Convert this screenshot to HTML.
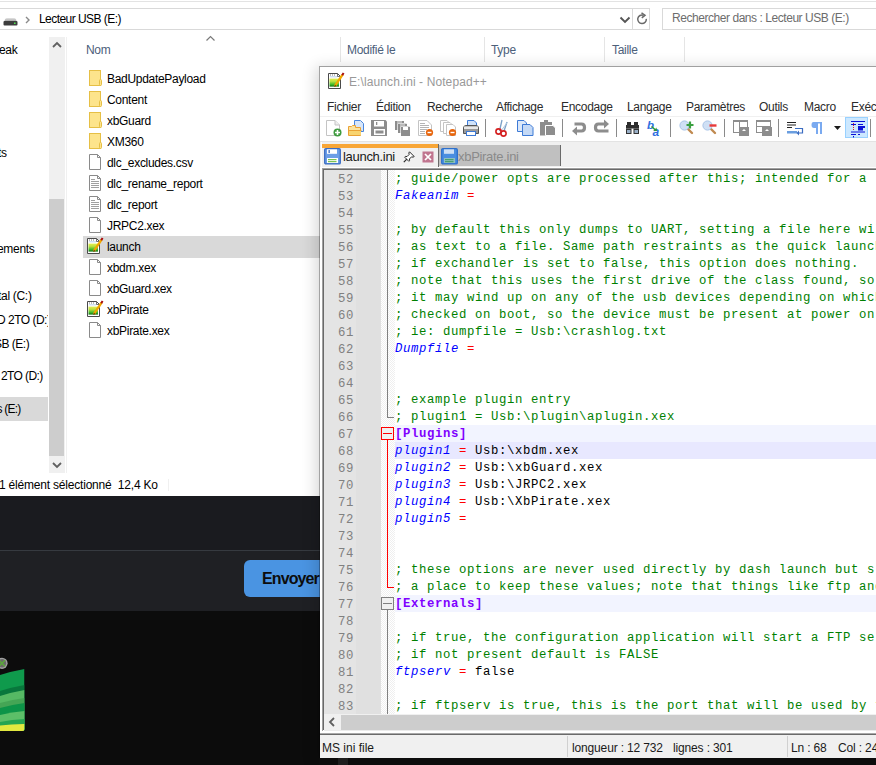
<!DOCTYPE html>
<html><head><meta charset="utf-8">
<style>
*{margin:0;padding:0;box-sizing:border-box}
html,body{width:876px;height:765px;overflow:hidden;background:#fff}
body{position:relative;font-family:"Liberation Sans",sans-serif;font-size:11.5px;color:#000}
.a{position:absolute}
.t{position:absolute;white-space:pre;line-height:1;font-size:12px;letter-spacing:-0.3px}
/* explorer */
#exp{position:absolute;left:0;top:0;width:876px;height:496px;background:#fff;overflow:hidden}
/* dark */
#dark{position:absolute;left:0;top:496px;width:320px;height:269px;background:#0c0c0c;overflow:hidden}
/* npp */
#npp{position:absolute;left:319px;top:66px;width:557px;height:699px;overflow:hidden}
.ln{position:absolute;left:0;width:30px;height:17px;font-family:"Liberation Mono",monospace;font-size:12.3px;letter-spacing:0.62px;line-height:21px;color:#808080;white-space:pre}
.ln span{position:absolute;right:0}
.cl{position:absolute;left:71px;height:17px;font-family:"Liberation Mono",monospace;font-size:12.3px;letter-spacing:0.62px;line-height:19px;white-space:pre;width:600px}
.c{color:#008000}
.k{color:#0000ff;font-style:italic}
.e{color:#ff0000}
.s{color:#8000ff;font-weight:bold}
</style></head><body>

<div id="exp">
  <!-- top strip -->
  <div class="a" style="left:0;top:1px;width:876px;height:1px;background:#e3e3e3"></div>
  <!-- address bar -->
  <div class="a" style="left:-2px;top:8px;width:652px;height:22px;border:1px solid #d9d9d9"></div>
  <div class="a" style="left:632px;top:9px;width:1px;height:20px;background:#d9d9d9"></div>
  <div class="a" style="left:662px;top:8px;width:220px;height:22px;border:1px solid #d9d9d9"></div>
  <div class="t" style="left:39px;top:12.5px;letter-spacing:-0.55px">Lecteur USB (E:)</div>
  <div class="t" style="left:672px;top:12px;letter-spacing:-0.45px;color:#6d6d6d">Rechercher dans : Lecteur USB (E:)</div>
  <!-- drive icon -->
  <svg class="a" style="left:2px;top:15px" width="18" height="12"><defs><linearGradient id="dg" x1="0" y1="0" x2="0" y2="1"><stop offset="0" stop-color="#e4e4e4"/><stop offset="1" stop-color="#a9a9a9"/></linearGradient></defs><path d="M2.5 6 Q3 3 5 3 H12 Q14 3 14.5 6 Z" fill="url(#dg)"/><rect x="1.5" y="6" width="14" height="4.5" rx="1" fill="#3c3c3c"/><rect x="12" y="7.5" width="1.6" height="1.5" fill="#4fe04f"/></svg>
  <svg class="a" style="left:24px;top:15px" width="8" height="10"><path d="M2 2 L5 5 L2 8" stroke="#8a8a8a" stroke-width="1.4" fill="none"/></svg>
  <svg class="a" style="left:619px;top:15px" width="12" height="10"><path d="M1.5 2.5 L6 7 L10.5 2.5" stroke="#555" stroke-width="1.9" fill="none"/></svg>
  <svg class="a" style="left:636px;top:12px" width="13" height="14"><path d="M10.3 6.8 A4.3 4.3 0 1 1 7.5 3.2" stroke="#6a6a6a" stroke-width="1.5" fill="none"/><path d="M5.5 0.8 L9 3.2 L5.8 5.8" stroke="#6a6a6a" stroke-width="1.5" fill="none"/></svg>

  <!-- nav pane -->
  <div class="a" style="left:0;top:37px;width:48px;height:438px;overflow:hidden">
  <div class="t" style="left:-1px;top:7px">eak</div>
  <div class="t" style="left:-2px;top:110px">ts</div>
  <div class="t" style="left:-3px;top:206px">ements</div>
  <div class="t" style="left:-2px;top:253px">tal (C:)</div>
  <div class="t" style="left:-3px;top:277px;letter-spacing:-0.5px">D 2TO (D:)</div>
  <div class="t" style="left:-6px;top:301px;letter-spacing:-0.5px">SB (E:)</div>
  <div class="a" style="left:0;top:360px;width:48px;height:24px;background:#d9d9d9"></div>
  <div class="t" style="left:1px;top:333px;letter-spacing:-0.6px">2TO (D:)</div>
  <div class="t" style="left:-3.5px;top:366px;letter-spacing:-0.8px">s (E:)</div>
  </div>
  <!-- nav scrollbar -->
  <div class="a" style="left:49px;top:37px;width:16px;height:436px;background:#f0f0f0"></div>
  <div class="a" style="left:49px;top:199px;width:15px;height:257px;background:#cdcdcd"></div>
  <svg class="a" style="left:51px;top:40px" width="12" height="10"><path d="M2 7 L6 3 L10 7" stroke="#606060" stroke-width="1.8" fill="none"/></svg>
  <svg class="a" style="left:51px;top:460px" width="12" height="10"><path d="M2 3 L6 7 L10 3" stroke="#606060" stroke-width="1.8" fill="none"/></svg>
  <div class="a" style="left:66px;top:37px;width:1px;height:436px;background:#f0f0f0"></div>

  <!-- column headers -->
  <div class="t" style="left:86px;top:44px;color:#4c607a">Nom</div>
  <div class="t" style="left:347px;top:44px;color:#4c607a">Modifié le</div>
  <div class="t" style="left:491px;top:44px;color:#4c607a">Type</div>
  <div class="t" style="left:612px;top:44px;color:#4c607a">Taille</div>
  <div class="a" style="left:340px;top:37px;width:1px;height:25px;background:#e5e5e5"></div>
  <div class="a" style="left:484px;top:37px;width:1px;height:25px;background:#e5e5e5"></div>
  <div class="a" style="left:604px;top:37px;width:1px;height:25px;background:#e5e5e5"></div>
  <div class="a" style="left:684px;top:37px;width:1px;height:25px;background:#e5e5e5"></div>
  <svg class="a" style="left:205px;top:35px" width="11" height="7"><path d="M1.5 5.5 L5.5 1.5 L9.5 5.5" stroke="#7a7a7a" stroke-width="1.2" fill="none"/></svg>

  <!-- file rows -->
  <div class="a" style="left:83px;top:236px;width:300px;height:22px;background:#d9d9d9"></div>
  <svg class="a" style="left:88px;top:70px" width="16" height="17"><rect x="1.5" y="0.5" width="11" height="15" fill="#fde48c" stroke="#e6bf45"/><rect x="11.5" y="9.5" width="2" height="6" rx="1" fill="#fde48c" stroke="#e6bf45"/></svg>
<div class="t" style="left:107px;top:73px">BadUpdatePayload</div>
<svg class="a" style="left:88px;top:91px" width="16" height="17"><rect x="1.5" y="0.5" width="11" height="15" fill="#fde48c" stroke="#e6bf45"/><rect x="11.5" y="9.5" width="2" height="6" rx="1" fill="#fde48c" stroke="#e6bf45"/></svg>
<div class="t" style="left:107px;top:94px">Content</div>
<svg class="a" style="left:88px;top:112px" width="16" height="17"><rect x="1.5" y="0.5" width="11" height="15" fill="#fde48c" stroke="#e6bf45"/><rect x="11.5" y="9.5" width="2" height="6" rx="1" fill="#fde48c" stroke="#e6bf45"/></svg>
<div class="t" style="left:107px;top:115px">xbGuard</div>
<svg class="a" style="left:88px;top:133px" width="16" height="17"><rect x="1.5" y="0.5" width="11" height="15" fill="#fde48c" stroke="#e6bf45"/><rect x="11.5" y="9.5" width="2" height="6" rx="1" fill="#fde48c" stroke="#e6bf45"/></svg>
<div class="t" style="left:107px;top:136px">XM360</div>
<svg class="a" style="left:88px;top:154px" width="16" height="17"><path d="M1.5 0.5 H9.5 L12.5 3.5 V15.5 H1.5 Z" fill="#fff" stroke="#8a8a8a"/><path d="M9.5 0.5 V3.5 H12.5" fill="none" stroke="#8a8a8a"/></svg>
<div class="t" style="left:107px;top:157px">dlc_excludes.csv</div>
<svg class="a" style="left:88px;top:175px" width="16" height="17"><path d="M1.5 0.5 H9.5 L12.5 3.5 V15.5 H1.5 Z" fill="#fff" stroke="#8a8a8a"/><path d="M9.5 0.5 V3.5 H12.5" fill="none" stroke="#8a8a8a"/><path d="M3 4.5 H7 M3 6.5 H11 M3 8.5 H11 M3 10.5 H11 M3 12.5 H11" stroke="#a0a0a0"/></svg>
<div class="t" style="left:107px;top:178px">dlc_rename_report</div>
<svg class="a" style="left:88px;top:196px" width="16" height="17"><path d="M1.5 0.5 H9.5 L12.5 3.5 V15.5 H1.5 Z" fill="#fff" stroke="#8a8a8a"/><path d="M9.5 0.5 V3.5 H12.5" fill="none" stroke="#8a8a8a"/><path d="M3 4.5 H7 M3 6.5 H11 M3 8.5 H11 M3 10.5 H11 M3 12.5 H11" stroke="#a0a0a0"/></svg>
<div class="t" style="left:107px;top:199px">dlc_report</div>
<svg class="a" style="left:88px;top:217px" width="16" height="17"><path d="M1.5 0.5 H9.5 L12.5 3.5 V15.5 H1.5 Z" fill="#fff" stroke="#8a8a8a"/><path d="M9.5 0.5 V3.5 H12.5" fill="none" stroke="#8a8a8a"/></svg>
<div class="t" style="left:107px;top:220px">JRPC2.xex</div>
<svg class="a" style="left:86px;top:237px" width="18" height="18"><path d="M1.5 1.5 H10.5 L13.5 4.5 V16.5 H1.5 Z" fill="#fff" stroke="#4a4a4a" stroke-width="1"/>
<path d="M10.5 1.5 V4.5 H13.5" fill="none" stroke="#4a4a4a" stroke-width="0.8"/>
<path d="M3.5 2.5 V3.5 M5.5 2.5 V3.5 M7.5 2.5 V3.5" stroke="#666" stroke-width="0.9"/>
<path d="M3 4.8 H10" stroke="#a8c8e8" stroke-width="0.8"/>
<rect x="2.5" y="6.6" width="9.5" height="8" fill="url(#gg)"/>
<path d="M7.8 14.2 L15.6 2.6" stroke="#f0a800" stroke-width="2.4"/>
<path d="M7.6 14.6 L8.6 13" stroke="#6a4a10" stroke-width="1.4"/>
<path d="M15.2 3.2 L16.6 1" stroke="#a80a0a" stroke-width="2"/></svg>
<div class="t" style="left:107px;top:241px">launch</div>
<svg class="a" style="left:88px;top:259px" width="16" height="17"><path d="M1.5 0.5 H9.5 L12.5 3.5 V15.5 H1.5 Z" fill="#fff" stroke="#8a8a8a"/><path d="M9.5 0.5 V3.5 H12.5" fill="none" stroke="#8a8a8a"/></svg>
<div class="t" style="left:107px;top:262px">xbdm.xex</div>
<svg class="a" style="left:88px;top:280px" width="16" height="17"><path d="M1.5 0.5 H9.5 L12.5 3.5 V15.5 H1.5 Z" fill="#fff" stroke="#8a8a8a"/><path d="M9.5 0.5 V3.5 H12.5" fill="none" stroke="#8a8a8a"/></svg>
<div class="t" style="left:107px;top:283px">xbGuard.xex</div>
<svg class="a" style="left:86px;top:300px" width="18" height="18"><path d="M1.5 1.5 H10.5 L13.5 4.5 V16.5 H1.5 Z" fill="#fff" stroke="#4a4a4a" stroke-width="1"/>
<path d="M10.5 1.5 V4.5 H13.5" fill="none" stroke="#4a4a4a" stroke-width="0.8"/>
<path d="M3.5 2.5 V3.5 M5.5 2.5 V3.5 M7.5 2.5 V3.5" stroke="#666" stroke-width="0.9"/>
<path d="M3 4.8 H10" stroke="#a8c8e8" stroke-width="0.8"/>
<rect x="2.5" y="6.6" width="9.5" height="8" fill="url(#gg)"/>
<path d="M7.8 14.2 L15.6 2.6" stroke="#f0a800" stroke-width="2.4"/>
<path d="M7.6 14.6 L8.6 13" stroke="#6a4a10" stroke-width="1.4"/>
<path d="M15.2 3.2 L16.6 1" stroke="#a80a0a" stroke-width="2"/></svg>
<div class="t" style="left:107px;top:304px">xbPirate</div>
<svg class="a" style="left:88px;top:322px" width="16" height="17"><path d="M1.5 0.5 H9.5 L12.5 3.5 V15.5 H1.5 Z" fill="#fff" stroke="#8a8a8a"/><path d="M9.5 0.5 V3.5 H12.5" fill="none" stroke="#8a8a8a"/></svg>
<div class="t" style="left:107px;top:325px">xbPirate.xex</div>

  <!-- status -->
  <div class="t" style="left:-1px;top:479px;letter-spacing:-0.2px">1 élément sélectionné  12,4 Ko</div>
  <div class="a" style="left:168px;top:479px;width:1px;height:12px;background:#f0f0f0"></div>
</div>

<div id="dark">
  <div class="a" style="left:0;top:0;width:320px;height:54px;background:#1a1b1f"></div>
  <div class="a" style="left:0;top:54px;width:320px;height:1px;background:#363a40"></div>
  <div class="a" style="left:0;top:55px;width:320px;height:60px;background:#1f2024"></div>
  <div class="a" style="left:244px;top:64px;width:90px;height:37px;background:#4a94e2;border-radius:6px"></div>
  <div class="t" style="left:262px;top:74.5px;font-size:16px;font-weight:bold;letter-spacing:-0.9px;color:#0d0d0d">Envoyer</div>
  <!-- xbox logo -->
  <svg class="a" style="left:0;top:155px" width="30" height="85"><defs><clipPath id="xc"><path d="M0 0 H24.5 V78 Q24.5 80 22.5 80 H0 Z"/></clipPath></defs><g clip-path="url(#xc)">
<path d="M0 24 Q12 20.2 24.5 18 L24.5 82 L0 82 Z" fill="#0f9a4c"/>
<path d="M0 40 Q12 36.2 24.5 34 L24.5 82 L0 82 Z" fill="#08773c"/>
<path d="M0 45 Q12 41.2 24.5 39 L24.5 82 L0 82 Z" fill="#56b964"/>
<path d="M0 52 Q12 48.7 24.5 47 L24.5 82 L0 82 Z" fill="#45a555"/>
<path d="M0 57 Q12 53.7 24.5 52 L24.5 82 L0 82 Z" fill="#0d9448"/>
<path d="M0 64 Q12 61.2 24.5 60 L24.5 82 L0 82 Z" fill="#5cbf68"/>
<path d="M0 71 Q12 68.7 24.5 68 L24.5 82 L0 82 Z" fill="#25a552"/>
<path d="M0 74.5 Q12 72.95 24.5 73 L24.5 82 L0 82 Z" fill="#e2e840"/></g>
    <circle cx="2" cy="12.3" r="5.6" fill="#a0a0a0"/><circle cx="2" cy="12.3" r="4.2" fill="#6a6a6a"/><path d="M-1 9.3 L5 15.3 M5 9.3 L-1 15.3" stroke="#5aa83a" stroke-width="1.4"/>
  </svg>
</div>

<div class="a" style="left:319px;top:66px;width:600px;height:692px;box-shadow:-1px 3px 14px 2px rgba(0,0,0,0.16)"></div>
<div id="npp">
  <div class="a" style="left:1px;top:1px;width:556px;height:691px;background:#fff"></div>
  <!-- borders -->
  <div class="a" style="left:0;top:0;width:1px;height:699px;background:rgba(0,0,0,0.36)"></div>
  <div class="a" style="left:0;top:0;width:557px;height:1px;background:#a0a0a0"></div>
  <!-- title -->
  <svg class="a" style="left:8px;top:6px" width="18" height="18"><defs><linearGradient id="gg" x1="0" y1="0" x2="0" y2="1"><stop offset="0" stop-color="#e6ee50"/><stop offset="0.35" stop-color="#b8e040"/><stop offset="0.75" stop-color="#3cb82a"/><stop offset="1" stop-color="#0a6e0a"/></linearGradient></defs>
<path d="M1.5 1.5 H10.5 L13.5 4.5 V16.5 H1.5 Z" fill="#fff" stroke="#4a4a4a" stroke-width="1"/>
<path d="M10.5 1.5 V4.5 H13.5" fill="none" stroke="#4a4a4a" stroke-width="0.8"/>
<path d="M3.5 2.5 V3.5 M5.5 2.5 V3.5 M7.5 2.5 V3.5" stroke="#666" stroke-width="0.9"/>
<path d="M3 4.8 H10" stroke="#a8c8e8" stroke-width="0.8"/>
<rect x="2.5" y="6.6" width="9.5" height="8" fill="url(#gg)"/>
<path d="M7.8 14.2 L15.6 2.6" stroke="#f0a800" stroke-width="2.4"/>
<path d="M7.6 14.6 L8.6 13" stroke="#6a4a10" stroke-width="1.4"/>
<path d="M15.2 3.2 L16.6 1" stroke="#a80a0a" stroke-width="2"/>
</svg>
  <div class="t" style="left:30px;top:10px;letter-spacing:0.1px;color:#999">E:\launch.ini - Notepad++</div>
  <!-- menu -->
  <div class="t" style="left:8px;top:35px;color:#2b2b2b">Fichier</div>
  <div class="t" style="left:57px;top:35px;color:#2b2b2b">Édition</div>
  <div class="t" style="left:108px;top:35px;color:#2b2b2b">Recherche</div>
  <div class="t" style="left:177px;top:35px;color:#2b2b2b">Affichage</div>
  <div class="t" style="left:242px;top:35px;color:#2b2b2b">Encodage</div>
  <div class="t" style="left:308px;top:35px;color:#2b2b2b">Langage</div>
  <div class="t" style="left:367px;top:35px;color:#2b2b2b">Paramètres</div>
  <div class="t" style="left:440px;top:35px;color:#2b2b2b">Outils</div>
  <div class="t" style="left:485px;top:35px;color:#2b2b2b">Macro</div>
  <div class="t" style="left:532px;top:35px;color:#2b2b2b">Exécution</div>
  <div class="a" style="left:1px;top:50px;width:556px;height:1px;background:#f0f0f0"></div>
  <!-- toolbar -->
  <svg class="a" style="left:0;top:51px" width="557" height="24"><g transform="translate(-319,-117)">
<!-- new -->
<path d="M326.5 120.5 H335 L339.5 125 V135.5 H326.5 Z" fill="#fff" stroke="#c4c4c4"/>
<path d="M335 120.5 V125 H339.5" fill="#eee" stroke="#c4c4c4"/>
<circle cx="337.5" cy="132.5" r="4" fill="#3f9b3f"/>
<path d="M337.5 130 V135 M335 132.5 H340" stroke="#fff" stroke-width="1.6"/>
<!-- open -->
<path d="M354.5 120.5 H360.5 L363.5 123.5 V131.5 H354.5 Z" fill="#d6e6fb" stroke="#4a86dc"/>
<path d="M348.5 126.5 H351.5 L352.5 125.5 H355.5 V127.5 H360.5 V135.5 H348.5 Z" fill="#fbe3a0" stroke="#eaa235"/>
<path d="M349 130.5 H361 V135 H349 Z" fill="#f8d470"/>
<path d="M348.5 130.5 H361.5" stroke="#eaa235"/>
<!-- save -->
<path d="M371 120 H385.5 L387 121.5 V136 H371 Z" fill="#8d8d8d"/>
<rect x="374" y="121" width="10" height="5.5" fill="#fff"/>
<rect x="376" y="122" width="1.3" height="3" fill="#8d8d8d"/>
<rect x="374" y="129" width="11" height="6" fill="#fff"/>
<rect x="375.5" y="130.5" width="8" height="3" fill="#8d8d8d"/>
<!-- save all -->
<rect x="395" y="121" width="9" height="9" fill="#8d8d8d"/>
<rect x="397" y="121.5" width="5" height="1" fill="#e8e8e8"/>
<path d="M397.5 130 V123.5 H406.5" stroke="#d8d8d8" stroke-width="1" fill="none"/>
<rect x="398" y="124" width="9" height="9" fill="#8d8d8d"/>
<rect x="400" y="124.5" width="5" height="1" fill="#e8e8e8"/>
<path d="M400.5 133 V126.5 H409.5" stroke="#d8d8d8" stroke-width="1" fill="none"/>
<rect x="401" y="127" width="9" height="9" fill="#8d8d8d"/>
<rect x="403" y="127" width="5" height="3" fill="#fff"/>
<!-- close -->
<path d="M418.5 120.5 H427 L431.5 125 V135.5 H418.5 Z" fill="#fff" stroke="#c4c4c4"/>
<path d="M420 123.5 H425 M420 125.5 H429 M420 127.5 H429 M420 129.5 H427 M420 131.5 H425 M420 133.5 H425" stroke="#b4b4b4" stroke-width="1"/>
<circle cx="429.5" cy="132.5" r="3.6" fill="#e8650c"/>
<path d="M427.5 132.5 H431.5" stroke="#fff" stroke-width="1.4"/>
<!-- close all -->
<path d="M440.5 120.5 H447 L449.5 123 V131.5 H440.5 Z" fill="#fff" stroke="#c4c4c4"/>
<path d="M443.5 122.5 H450 L452.5 125 V133.5 H443.5 Z" fill="#fff" stroke="#c4c4c4"/>
<path d="M446.5 124.5 H453 L455.5 127 V135.5 H446.5 Z" fill="#fff" stroke="#c4c4c4"/>
<circle cx="452.5" cy="132.5" r="3.6" fill="#e8650c"/>
<path d="M450.5 132.5 H454.5" stroke="#fff" stroke-width="1.4"/>
<!-- print -->
<path d="M467.5 120.5 H474 L476.5 123 V128 H467.5 Z" fill="#cfe2fa" stroke="#3d7ad6"/>
<path d="M463.5 128 Q463.5 125.5 466 125.5 H476 Q478.5 125.5 478.5 128 V133.5 H463.5 Z" fill="#9a9a9a" stroke="#555"/>
<rect x="464" y="126.5" width="14" height="2.5" fill="#e8e8e8"/>
<rect x="466.5" y="131.5" width="9" height="4" fill="#fff" stroke="#3d7ad6"/>
<!-- sep -->
<rect x="485" y="119" width="1" height="18" fill="#8a8a8a"/>
<!-- cut -->
<path d="M499.5 131 L502 120 M504 131 L507 122" stroke="#7aa0c8" stroke-width="1.3"/>
<path d="M501 131 L507.5 122" stroke="#b0c8e0" stroke-width="1"/>
<circle cx="498.5" cy="131.5" r="2.6" fill="none" stroke="#d42020" stroke-width="1.6"/>
<circle cx="503.5" cy="133.5" r="2.6" fill="none" stroke="#d42020" stroke-width="1.6"/>
<!-- copy -->
<path d="M517.5 120.5 H524 L526.5 123 V131.5 H517.5 Z" fill="#dbe8fa" stroke="#3d7ad6"/>
<path d="M522.5 124.5 H530 L533 127.5 V135.5 H522.5 Z" fill="#c4d9f6" stroke="#3d7ad6"/>
<!-- paste -->
<path d="M540 122 H544 V120 H548 V122 H552 V135.5 H540 Z" fill="#8d8d8d"/>
<path d="M545.5 125.5 H553 L555.5 128 V135.5 H545.5 Z" fill="#8d8d8d" stroke="#fff" stroke-width="1"/>
<path d="M547 127 H552 V134 H547 Z" fill="#8d8d8d"/>
<!-- sep -->
<rect x="562" y="119" width="1" height="18" fill="#8a8a8a"/>
<!-- undo -->
<path d="M574.5 124 H581.5 Q584.5 124 584.5 127.5 Q584.5 131 581.5 131 H577" stroke="#8d8d8d" stroke-width="3.2" fill="none"/>
<path d="M572 131 L577 126.5 V135.5 Z" fill="#8d8d8d"/>
<!-- redo -->
<path d="M605 124 H598.5 Q595.5 124 595.5 127.5 Q595.5 131 598.5 131 H608.5" stroke="#8d8d8d" stroke-width="3.2" fill="none"/>
<path d="M609 124 L604 119.5 V128.5 Z" fill="#8d8d8d"/>
<!-- sep -->
<rect x="616" y="119" width="1" height="18" fill="#8a8a8a"/>
<!-- find -->
<rect x="627" y="122" width="4" height="3" fill="#2e2e2e"/>
<rect x="634" y="122" width="4" height="3" fill="#2e2e2e"/>
<rect x="626" y="125" width="13" height="3.5" fill="#2e2e2e"/>
<rect x="626" y="128.5" width="5.5" height="5.5" fill="#333"/>
<rect x="633.5" y="128.5" width="5.5" height="5.5" fill="#333"/>
<rect x="627" y="130" width="3.5" height="3" fill="#9ab0c8"/>
<rect x="634.5" y="130" width="3.5" height="3" fill="#9ab0c8"/>
<!-- replace -->
<text x="647" y="128.5" font-family="Liberation Sans" font-style="italic" font-weight="bold" font-size="11.5" fill="#2f6fe0">b</text>
<text x="652.5" y="136" font-family="Liberation Sans" font-style="italic" font-weight="bold" font-size="12" fill="#2f6fe0">a</text>
<path d="M651.5 126.5 L655.5 130" stroke="#2e9a3a" stroke-width="1.6"/>
<path d="M653.5 131 L657 131 L656.5 127.5 Z" fill="#2e9a3a"/>
<!-- sep -->
<rect x="670" y="119" width="1" height="18" fill="#8a8a8a"/>
<!-- zoom in -->
<path d="M688 129 L692 133" stroke="#c08a50" stroke-width="2.4" stroke-linecap="round"/>
<circle cx="684.5" cy="125.5" r="4.6" fill="#cfe0f5" stroke="#a8c4e8" stroke-width="1"/>
<path d="M690 121.5 V128.5 M686.5 125 H693.5" stroke="#3aa040" stroke-width="2.2"/>
<!-- zoom out -->
<path d="M711 129 L715 133" stroke="#c08a50" stroke-width="2.4" stroke-linecap="round"/>
<circle cx="707.5" cy="125.5" r="4.6" fill="#cfe0f5" stroke="#a8c4e8" stroke-width="1"/>
<path d="M709.5 125.5 H716.5" stroke="#e83a3a" stroke-width="2.4"/>
<!-- sep -->
<rect x="724" y="119" width="1" height="18" fill="#8a8a8a"/>
<!-- sync v -->
<rect x="733.5" y="120.5" width="14" height="12" fill="#fff" stroke="#8d8d8d"/>
<rect x="733" y="120" width="15" height="2" fill="#8d8d8d"/>
<path d="M739.5 121 V132" stroke="#8d8d8d"/>
<rect x="739" y="127" width="10" height="9" fill="#8d8d8d"/>
<path d="M742 131 L744 129 L746 131" fill="#fff"/>
<!-- sync h -->
<rect x="756.5" y="120.5" width="14" height="12" fill="#fff" stroke="#8d8d8d"/>
<rect x="756" y="120" width="15" height="2" fill="#8d8d8d"/>
<path d="M757 126.5 H770" stroke="#8d8d8d"/>
<rect x="762" y="127" width="10" height="9" fill="#8d8d8d"/>
<path d="M765 131 L767 129 L769 131" fill="#fff"/>
<!-- sep -->
<rect x="778" y="119" width="1" height="18" fill="#8a8a8a"/>
<!-- wrap -->
<path d="M787 122.5 H796 M787 125 H796 M787 127.5 H792" stroke="#222" stroke-width="1"/>
<rect x="787" y="131" width="10" height="2.5" fill="#6a9ee0"/>
<path d="M795 128.5 H802.5 V133 H798" stroke="#3a6cc2" stroke-width="1.2" fill="none"/>
<path d="M796.5 133 L799 130.5 V135.5 Z" fill="#3a6cc2"/>
<!-- pilcrow -->
<path d="M817 122 H813.5 Q811.5 122 811.5 125 Q811.5 128 814 128 H817" fill="#7aaaf0"/>
<rect x="816" y="122" width="2" height="12" fill="#7aaaf0"/>
<rect x="820" y="122" width="2" height="12" fill="#7aaaf0"/>
<rect x="816" y="122" width="6" height="1.5" fill="#7aaaf0"/>
<!-- dropdown -->
<path d="M834 126 H841 L837.5 130 Z" fill="#1a1a1a"/>
<!-- indent guide (checked) -->
<rect x="845.5" y="117.5" width="22" height="20" fill="#cce8ff" stroke="#99d1ff"/>
<path d="M851 121.5 H865 M851 124.5 H856 M858 124.5 H863 M858 126.5 H865 M858 128.5 H863 M851 132 H865 M851 134.5 H856 M858 134.5 H860" stroke="#0a10d8" stroke-width="1.2"/>
<rect x="858" y="126" width="7" height="2" fill="#0a10d8"/>
<rect x="858" y="128.5" width="5" height="2" fill="#0a10d8"/>
<path d="M853.5 123 V131" stroke="#e02020" stroke-width="1" stroke-dasharray="1 1"/>
<rect x="853" y="136" width="1" height="1.5" fill="#0a10d8"/>
<!-- sep -->
<rect x="870" y="119" width="1" height="18" fill="#8a8a8a"/>
</g></svg>
  <div class="a" style="left:1px;top:75px;width:556px;height:1px;background:#e3e3e3"></div>
  <!-- tab bar -->
  <div class="a" style="left:1px;top:76px;width:556px;height:25px;background:#f0f0f0"></div>
  <div class="a" style="left:1px;top:101px;width:556px;height:1px;background:#fff"></div>
  <div class="a" style="left:2px;top:76px;width:1px;height:25px;background:#fff"></div>
  <div class="a" style="left:3px;top:78px;width:116px;height:4px;background:#f8a637"></div>
  <div class="a" style="left:119px;top:78px;width:1px;height:23px;background:#6a6a6a"></div>
  <div class="a" style="left:120px;top:79px;width:121px;height:21px;background:#c0c0c0"></div>
  <div class="a" style="left:241px;top:79px;width:1px;height:21px;background:#6a6a6a"></div>
  <svg class="a" style="left:5px;top:82px" width="17" height="17"><rect x="0.7" y="0.7" width="15.6" height="15.2" rx="1.2" fill="#6c9ee6" stroke="#3a6cc2" stroke-width="1.3"/><rect x="3" y="1.3" width="10" height="4.5" fill="#fff"/><rect x="4.5" y="2" width="1.3" height="3" fill="#3a6cc2"/><rect x="3" y="10" width="11" height="5" fill="#fff"/><rect x="4" y="11" width="8.5" height="1.2" fill="#7cc352"/><rect x="4" y="13" width="8.5" height="1.2" fill="#7cc352"/></svg>
  <div class="t" style="left:24px;top:84px;font-size:13px;color:#1a1a1a">launch.ini</div>
  <svg class="a" style="left:84px;top:85px" width="12" height="12"><path d="M6.5 0.8 L11.2 5.5 L10 6.2 L8.6 5.8 L6.4 8 L6.6 9.6 L5.8 10.3 L1.7 6.2 L2.4 5.4 L4 5.6 L6.2 3.4 L5.8 2 Z" fill="#fff" stroke="#2a2a2a" stroke-width="1"/><path d="M3.8 8.2 L0.8 11.2" stroke="#2a2a2a" stroke-width="1.2"/></svg>
  <svg class="a" style="left:103px;top:85px" width="12" height="12"><rect x="0.5" y="0.5" width="11" height="11" fill="#c0758f"/><path d="M3 3 L9 9 M9 3 L3 9" stroke="#fff" stroke-width="1.7"/></svg>
  <svg class="a" style="left:122px;top:82px" width="17" height="17"><rect x="0.7" y="0.7" width="15.6" height="15.2" rx="1.2" fill="#4a8ee0" stroke="#2d6fcc" stroke-width="1.3"/><rect x="3" y="1.3" width="10" height="4.5" fill="#cfe0f5"/><rect x="3" y="10" width="11" height="5" fill="#8fc0c0"/><rect x="4" y="11" width="8.5" height="1.2" fill="#4aa070"/><rect x="4" y="13" width="8.5" height="1.2" fill="#4aa070"/></svg>
  <div class="t" style="left:139px;top:84px;font-size:13px;color:#8a8a8a">xbPirate.ini</div>
  <!-- editor frame -->
  <div class="a" style="left:3px;top:102px;width:554px;height:1px;background:#a0a0a0"></div>
  <div class="a" style="left:3px;top:103px;width:554px;height:1px;background:#696969"></div>
  <div class="a" style="left:3px;top:103px;width:1px;height:562px;background:#a0a0a0"></div>
  <div class="a" style="left:4px;top:103px;width:1px;height:561px;background:#696969"></div>
  <div id="ed" style="position:absolute;left:5px;top:104px;width:552px;height:544px;background:#fff;overflow:hidden">
    <div class="a" style="left:0;top:0;width:32px;height:544px;background:#e4e4e4"></div>
    <div class="a" style="left:32px;top:0;width:25px;height:544px;background:#e0e0e0"></div>
    <div class="a" style="left:57px;top:0;width:14px;height:544px;background-color:#fff;background-image:repeating-conic-gradient(#efefef 0 25%,#fff 0 50%);background-size:2px 2px"></div>
<div class="cl" style="top:0px;"><span class="c">; guide/power opts are processed after this; intended for a</span></div>
<div class="ln" style="top:0px"><span>52</span></div>
<div class="cl" style="top:17px;"><span class="k">Fakeanim</span> <span class="e">=</span> </div>
<div class="ln" style="top:17px"><span>53</span></div>
<div class="cl" style="top:34px;"></div>
<div class="ln" style="top:34px"><span>54</span></div>
<div class="cl" style="top:51px;"><span class="c">; by default this only dumps to UART, setting a file here will</span></div>
<div class="ln" style="top:51px"><span>55</span></div>
<div class="cl" style="top:68px;"><span class="c">; as text to a file. Same path restraints as the quick launch</span></div>
<div class="ln" style="top:68px"><span>56</span></div>
<div class="cl" style="top:85px;"><span class="c">; if exchandler is set to false, this option does nothing.</span></div>
<div class="ln" style="top:85px"><span>57</span></div>
<div class="cl" style="top:102px;"><span class="c">; note that this uses the first drive of the class found, so</span></div>
<div class="ln" style="top:102px"><span>58</span></div>
<div class="cl" style="top:119px;"><span class="c">; it may wind up on any of the usb devices depending on which</span></div>
<div class="ln" style="top:119px"><span>59</span></div>
<div class="cl" style="top:136px;"><span class="c">; checked on boot, so the device must be present at power on</span></div>
<div class="ln" style="top:136px"><span>60</span></div>
<div class="cl" style="top:153px;"><span class="c">; ie: dumpfile = Usb:\crashlog.txt</span></div>
<div class="ln" style="top:153px"><span>61</span></div>
<div class="cl" style="top:170px;"><span class="k">Dumpfile</span> <span class="e">=</span> </div>
<div class="ln" style="top:170px"><span>62</span></div>
<div class="cl" style="top:187px;"></div>
<div class="ln" style="top:187px"><span>63</span></div>
<div class="cl" style="top:204px;"></div>
<div class="ln" style="top:204px"><span>64</span></div>
<div class="cl" style="top:221px;"><span class="c">; example plugin entry</span></div>
<div class="ln" style="top:221px"><span>65</span></div>
<div class="cl" style="top:238px;"><span class="c">; plugin1 = Usb:\plugin\aplugin.xex</span></div>
<div class="ln" style="top:238px"><span>66</span></div>
<div class="cl" style="top:255px;background:#f2f4ff;"><span class="s">[Plugins]</span></div>
<div class="ln" style="top:255px"><span>67</span></div>
<div class="cl" style="top:272px;background:#e8e8ff;"><span class="k">plugin1</span> <span class="e">=</span> Usb:\xbdm.xex</div>
<div class="ln" style="top:272px"><span>68</span></div>
<div class="cl" style="top:289px;"><span class="k">plugin2</span> <span class="e">=</span> Usb:\xbGuard.xex</div>
<div class="ln" style="top:289px"><span>69</span></div>
<div class="cl" style="top:306px;"><span class="k">plugin3</span> <span class="e">=</span> Usb:\JRPC2.xex</div>
<div class="ln" style="top:306px"><span>70</span></div>
<div class="cl" style="top:323px;"><span class="k">plugin4</span> <span class="e">=</span> Usb:\XbPirate.xex</div>
<div class="ln" style="top:323px"><span>71</span></div>
<div class="cl" style="top:340px;"><span class="k">plugin5</span> <span class="e">=</span> </div>
<div class="ln" style="top:340px"><span>72</span></div>
<div class="cl" style="top:357px;"></div>
<div class="ln" style="top:357px"><span>73</span></div>
<div class="cl" style="top:374px;"></div>
<div class="ln" style="top:374px"><span>74</span></div>
<div class="cl" style="top:391px;"><span class="c">; these options are never used directly by dash launch but s</span></div>
<div class="ln" style="top:391px"><span>75</span></div>
<div class="cl" style="top:408px;"><span class="c">; a place to keep these values; note that things like ftp and</span></div>
<div class="ln" style="top:408px"><span>76</span></div>
<div class="cl" style="top:425px;background:#f2f4ff;"><span class="s">[Externals]</span></div>
<div class="ln" style="top:425px"><span>77</span></div>
<div class="cl" style="top:442px;"></div>
<div class="ln" style="top:442px"><span>78</span></div>
<div class="cl" style="top:459px;"><span class="c">; if true, the configuration application will start a FTP se</span></div>
<div class="ln" style="top:459px"><span>79</span></div>
<div class="cl" style="top:476px;"><span class="c">; if not present default is FALSE</span></div>
<div class="ln" style="top:476px"><span>80</span></div>
<div class="cl" style="top:493px;"><span class="k">ftpserv</span> <span class="e">=</span> false</div>
<div class="ln" style="top:493px"><span>81</span></div>
<div class="cl" style="top:510px;"></div>
<div class="ln" style="top:510px"><span>82</span></div>
<div class="cl" style="top:527px;"><span class="c">; if ftpserv is true, this is the port that will be used by t</span></div>
<div class="ln" style="top:527px"><span>83</span></div>
    <!-- fold markers -->
    <div class="a" style="left:63px;top:0;width:1px;height:248px;background:#808080"></div>
    <div class="a" style="left:63px;top:247px;width:7px;height:1px;background:#808080"></div>
    <div class="a" style="left:57px;top:257px;width:13px;height:13px;border:1px solid #ff0000;background:#f0f0f0"></div>
    <div class="a" style="left:59px;top:263px;width:9px;height:1px;background:#ff0000"></div>
    <div class="a" style="left:63px;top:270px;width:1px;height:148px;background:#ff0000"></div>
    <div class="a" style="left:63px;top:417px;width:7px;height:1px;background:#ff0000"></div>
    <div class="a" style="left:57px;top:427px;width:13px;height:13px;border:1px solid #808080;background:#f0f0f0"></div>
    <div class="a" style="left:59px;top:433px;width:9px;height:1px;background:#808080"></div>
    <div class="a" style="left:63px;top:440px;width:1px;height:110px;background:#808080"></div>
  </div>
  <!-- hscroll -->
  <div class="a" style="left:5px;top:648px;width:552px;height:17px;background:#f0f0f0"></div>
  <div class="a" style="left:22px;top:649px;width:540px;height:15px;background:#cdcdcd"></div>
  <svg class="a" style="left:8px;top:650px" width="10" height="12"><path d="M7 2 L3 6 L7 10" stroke="#606060" stroke-width="1.8" fill="none"/></svg>
  <!-- status bar -->
  <div class="a" style="left:5px;top:664px;width:552px;height:1px;background:#ebebeb"></div>
  <div class="a" style="left:1px;top:665px;width:556px;height:2px;background:#fff"></div>
  <div class="a" style="left:1px;top:667px;width:556px;height:1px;background:#a8a8a8"></div>
  <div class="a" style="left:1px;top:668px;width:556px;height:1px;background:#6a6a6a"></div>
  <div class="a" style="left:1px;top:669px;width:556px;height:23px;background:#f0f0f0"></div>
  <div class="t" style="left:3px;top:676px;letter-spacing:0px;color:#1a1a1a">MS ini file</div>
  <div class="a" style="left:248px;top:670px;width:1px;height:21px;background:#d0d0d0"></div>
  <div class="t" style="left:253px;top:676px;letter-spacing:-0.15px;color:#1a1a1a">longueur : 12 732</div>
  <div class="t" style="left:354px;top:676px;letter-spacing:-0.15px;color:#1a1a1a">lignes : 301</div>
  <div class="a" style="left:468px;top:670px;width:1px;height:21px;background:#d0d0d0"></div>
  <div class="t" style="left:472px;top:676px;letter-spacing:-0.15px;color:#1a1a1a">Ln : 68</div>
  <div class="t" style="left:519px;top:676px;letter-spacing:-0.15px;color:#1a1a1a">Col : 24</div>
  <div class="a" style="left:0;top:692px;width:557px;height:7px;background:#0c0c0c"></div>
  <div class="a" style="left:19px;top:692px;width:10px;height:7px;background:#1e1e1e"></div>
</div>

</body></html>
